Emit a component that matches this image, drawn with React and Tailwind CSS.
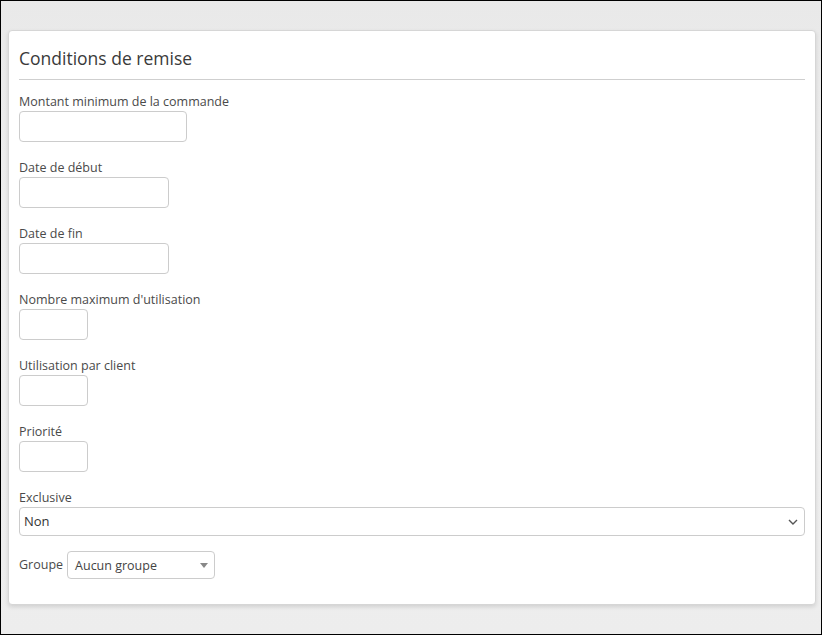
import React from 'react';

const Field = ({ label, width }) => (
    <div className="mb-[16px] flex flex-col">
        <label className="h-[18px] pt-px text-[12.5px] leading-[18px] text-[#4a4a4a]">{label}</label>
        <div className={`mt-px h-[31px] rounded-[4px] border border-[#ccc] bg-white ${width}`} />
    </div>
);

const App = () => {
    return (
        <div
            className="flex h-[635px] w-[822px] flex-col border border-black bg-gradient-to-b from-[#e9e9e9] via-[#f1f1f1] to-[#ededed] pb-[29px] pl-[7px] pr-[5px] pt-[29px]"
            style={{ fontFamily: '"Open Sans", "Liberation Sans", sans-serif' }}
        >
            <div className="flex flex-1 flex-col rounded-[4px] border border-[#d6d6d6] bg-white px-[10px] pt-[14px] shadow-[0_2px_4px_rgba(0,0,0,0.12)]">
                {/* Title */}
                <h2 className="h-[26px] text-[17.5px] leading-[26px] text-[#3a3a3a]">Conditions de remise</h2>
                <div className="mt-[8px] border-t border-[#cfcfcf]" />

                <div className="mt-[12px] flex flex-col">
                    <Field label="Montant minimum de la commande" width="w-[168px]" />
                    <Field label="Date de début" width="w-[150px]" />
                    <Field label="Date de fin" width="w-[150px]" />
                    <Field label="Nombre maximum d'utilisation" width="w-[69px]" />
                    <Field label="Utilisation par client" width="w-[69px]" />
                    <Field label="Priorité" width="w-[69px]" />

                    {/* Exclusive */}
                    <div className="flex flex-col">
                        <label className="h-[18px] pt-px text-[12.5px] leading-[18px] text-[#4a4a4a]">Exclusive</label>
                        <div className="mt-px flex h-[29px] items-center justify-between rounded-[4px] border border-[#ccc] bg-white pl-[4px] pr-[6px]">
                            <span className="text-[13px] text-[#333]">Non</span>
                            <svg width="10" height="6" viewBox="0 0 10 6" fill="none">
                                <polyline points="1,1 5,5 9,1" stroke="#555" strokeWidth="1.4" />
                            </svg>
                        </div>
                    </div>

                    {/* Groupe */}
                    <div className="mt-[15px] flex items-center gap-[4px]">
                        <label className="text-[12.5px] leading-[18px] text-[#4a4a4a]">Groupe</label>
                        <div className="flex h-[28px] w-[148px] items-center justify-between rounded-[4px] border border-[#ccc] bg-white pl-[7px] pr-[6px]">
                            <span className="pt-[2px] text-[12.5px] text-[#444]">Aucun groupe</span>
                            <svg width="8" height="5" viewBox="0 0 8 5">
                                <polygon points="0,0 8,0 4,5" fill="#888" />
                            </svg>
                        </div>
                    </div>
                </div>
            </div>
        </div>
    );
};

export default App;
